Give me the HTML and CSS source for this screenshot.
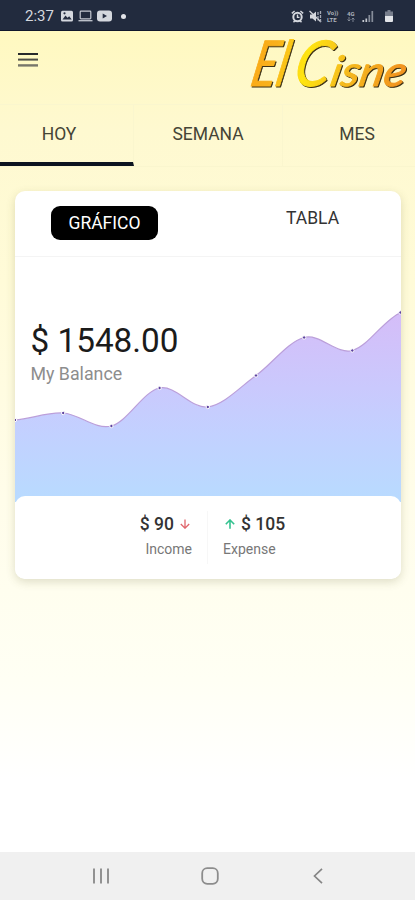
FILE: index.html
```html
<!DOCTYPE html>
<html lang="es">

<head>
    <meta charset="UTF-8">
    <meta name="viewport" content="width=device-width, initial-scale=1.0">
    <title>El Cisne</title>
    <link rel="stylesheet" href="styles.css">
</head>

<body>

    <!-- Barra de estado -->
    <div class="status-bar">
        <div class="status-left">
            <span class="hora">2:37</span>
            <svg width="14" height="12" viewBox="0 0 14 12">
                <rect x="1" y="0.7" width="12" height="10.8" rx="1.5" fill="#d5d8de" />
                <path d="M2.5 9.5l3-4 2 2.3 1.7-1.5 2.5 3.2z" fill="#252d40" />
                <circle cx="4.5" cy="3.3" r="1.1" fill="#252d40" />
            </svg>
            <svg width="15" height="12" viewBox="0 0 15 12">
                <rect x="2.2" y="1.2" width="10.6" height="7.6" rx="0.8" fill="none" stroke="#c5c9d1" stroke-width="1.2" />
                <path d="M0.5 10.7h14" stroke="#c5c9d1" stroke-width="1.3" />
            </svg>
            <svg width="15" height="12" viewBox="0 0 15 12">
                <rect x="0" y="0.5" width="15" height="11" rx="3" fill="#d5d8de" />
                <path d="M5.7 3.5v5L10 6z" fill="#252d40" />
            </svg>
            <span class="punto"></span>
        </div>
        <div class="status-right">
            <svg width="13" height="13" viewBox="0 0 13 13">
                <circle cx="6.5" cy="7" r="4.2" fill="none" stroke="#d5d8de" stroke-width="2" />
                <path d="M0.8 3.4L3.6 1M12.2 3.4L9.4 1M2.5 12.3l1.4-1.6M10.5 12.3l-1.4-1.6M6.5 4.6v2.8h2" fill="none" stroke="#d5d8de" stroke-width="1.4" />
            </svg>
            <svg width="13" height="13" viewBox="0 0 13 13">
                <path d="M1 4.5h2.5L7 1.5v10L3.5 8.5H1z" fill="#d5d8de" />
                <path d="M0.5 1L12 12" stroke="#d5d8de" stroke-width="1.3" />
                <path d="M9 2v8.5M11.5 1v11" stroke="#a5aab5" stroke-width="1.3" stroke-dasharray="3 1" />
            </svg>
            <span class="volte"><span>Vo))</span><span>LTE</span></span>
            <span class="red">
                <span>4G</span>
                <svg width="8" height="5" viewBox="0 0 8 5">
                    <path d="M2 0v4M0.5 2.5L2 4l1.5-1.5M6 5V1M4.5 2.5L6 1l1.5 1.5" fill="none" stroke="#868d9a" stroke-width="0.9" />
                </svg>
            </span>
            <svg width="12" height="12" viewBox="0 0 12 12">
                <path d="M1.3 12v-2M4.3 12V8.5" stroke="#c5c9d1" stroke-width="1.7" />
                <path d="M7.3 12V5M10.3 12V1" stroke="#868d9a" stroke-width="1.7" />
            </svg>
            <svg class="bateria" width="8" height="12" viewBox="0 0 8 12">
                <path d="M2.5 0h3v1.5H8V7H0V1.5h2.5z" fill="#777e8c" />
                <path d="M0 6h8v5a1 1 0 0 1-1 1H1a1 1 0 0 1-1-1z" fill="#e2e4e8" />
            </svg>
        </div>
    </div>

    <!-- Cabecera con menú y logo -->
    <header class="cabecera">
        <svg class="menu" width="20" height="16" viewBox="0 0 20 16">
            <path d="M0 2h20" stroke="#272a2c" stroke-width="2" />
            <path d="M0 7.6h20" stroke="#4e4f48" stroke-width="2" />
            <path d="M0 13.4h20" stroke="#77766a" stroke-width="2.4" />
        </svg>
        <svg class="logo" width="162" height="60" viewBox="0 0 162 60">
            <defs>
                <linearGradient id="oro" gradientUnits="userSpaceOnUse" x1="0" y1="0" x2="162" y2="0">
                    <stop offset="0" stop-color="#fba614" />
                    <stop offset="0.2" stop-color="#f9b11c" />
                    <stop offset="0.4" stop-color="#ffe510" />
                    <stop offset="0.65" stop-color="#f5bc1d" />
                    <stop offset="1" stop-color="#f2951f" />
                </linearGradient>
            </defs>
            <g class="logo-texto" transform="skewX(-12)">
                <text x="13" y="53" class="grande" textLength="36" lengthAdjust="spacingAndGlyphs">El</text>
                <text x="56" y="53" class="grande" textLength="36" lengthAdjust="spacingAndGlyphs">C</text>
                <text x="93" y="53" class="chica" textLength="75" lengthAdjust="spacingAndGlyphs">isne</text>
            </g>
        </svg>
    </header>

    <nav class="tabs">
        <div class="tab activo">HOY</div>
        <div class="tab">SEMANA</div>
        <div class="tab">MES</div>
    </nav>

    <main class="tarjeta">
        <div class="opciones">
            <div class="opcion"><span class="boton">GRÁFICO</span></div>
            <div class="opcion"><span class="enlace">TABLA</span></div>
        </div>

        <div class="grafico">
            <svg class="curva" width="386" height="245" viewBox="0 0 386 245">
                <defs>
                    <linearGradient id="area" gradientUnits="userSpaceOnUse" x1="0" y1="55" x2="0" y2="245">
                        <stop offset="0" stop-color="#d5bdf8" />
                        <stop offset="0.4" stop-color="#cac9fd" />
                        <stop offset="0.65" stop-color="#c2d1ff" />
                        <stop offset="1" stop-color="#b8dbff" />
                    </linearGradient>
                </defs>
                <path fill="url(#area)" d="M0 163C16 161.8 32.1 155 48.2 156C64.3 157 80.3 173.2 96.4 169C112.4 164.8 128.5 134.2 144.6 131C160.6 127.8 176.7 152.1 192.8 150C208.8 147.9 224.9 130.1 241 118.5C257 106.9 273 84.7 289.1 80.5C305.2 76.3 321.3 97.7 337.3 93.5C353.4 89.3 369.4 61.8 386 55.5V245H0z" />
                <path class="linea" d="M0 163C16 161.8 32.1 155 48.2 156C64.3 157 80.3 173.2 96.4 169C112.4 164.8 128.5 134.2 144.6 131C160.6 127.8 176.7 152.1 192.8 150C208.8 147.9 224.9 130.1 241 118.5C257 106.9 273 84.7 289.1 80.5C305.2 76.3 321.3 97.7 337.3 93.5C353.4 89.3 369.4 61.8 386 55.5" />
                <g class="marcas">
                    <circle cx="0" cy="163" r="1.7" />
                    <circle cx="48.2" cy="156" r="1.7" />
                    <circle cx="96.4" cy="169" r="1.7" />
                    <circle cx="144.6" cy="131" r="1.7" />
                    <circle cx="192.8" cy="150" r="1.7" />
                    <circle cx="241" cy="118.5" r="1.7" />
                    <circle cx="289.1" cy="80.5" r="1.7" />
                    <circle cx="337.3" cy="93.5" r="1.7" />
                    <circle cx="385.5" cy="55.5" r="1.7" />
                </g>
            </svg>
            <!-- Saldo encima de la curva -->
            <div class="saldo">
                <div class="monto">$ 1548.00</div>
                <div class="detalle">My Balance</div>
            </div>
        </div>

        <div class="resumen">
            <div class="ingreso">
                <div class="valor">$ 90
                    <svg width="10" height="10" viewBox="0 0 10 10">
                        <path d="M5 0.5v8.5M0.8 5L5 9.2 9.2 5" fill="none" stroke="#e0666c" stroke-width="1.3" />
                    </svg>
                </div>
                <div class="nombre">Income</div>
            </div>
            <div class="gasto">
                <div class="valor">
                    <svg width="10" height="10" viewBox="0 0 10 10">
                        <path d="M5 9.7V1.2M0.8 5.2L5 1 9.2 5.2" fill="none" stroke="#35c290" stroke-width="1.6" />
                    </svg>
                    $ 105
                </div>
                <div class="nombre">Expense</div>
            </div>
        </div>
    </main>

    <!-- Barra de navegación del teléfono -->
    <footer class="nav-bar">
        <svg width="18" height="18" viewBox="0 0 18 18">
            <path d="M2 1.5v15M9 1.5v15M16 1.5v15" stroke="#929292" stroke-width="2" />
        </svg>
        <svg width="18" height="18" viewBox="0 0 18 18">
            <rect x="1.2" y="1.2" width="15.6" height="15.6" rx="5" fill="none" stroke="#8c8c8c" stroke-width="1.8" />
        </svg>
        <svg width="18" height="18" viewBox="0 0 18 18">
            <path d="M13 1.8L5.5 9l7.5 7.2" fill="none" stroke="#858585" stroke-width="1.7" />
        </svg>
    </footer>

</body>

</html>
```

FILE: styles.css
```css
body {
    font-family: Roboto, "Liberation Sans", sans-serif;
    margin: 0;
    height: 900px;
    display: flex;
    flex-direction: column;
    overflow: hidden;
    color: #333;
    background: linear-gradient(#fff9c0 30px, #fef9d0 130px, #fffbd8 280px, #fffdea 500px, #fffff4 680px, #fff 780px);
}

svg {
    display: block;
}

.status-bar {
    height: 31px;
    box-sizing: border-box;
    flex-shrink: 0;
    background-color: #222b3e;
    border-bottom: 1px solid #10172c;
    color: #d5d8de;
    display: flex;
    justify-content: space-between;
    padding: 2px 22px 0 25px;
}

.status-left,
.status-right {
    display: flex;
    align-items: center;
}

.status-left {
    gap: 4px;
}

.hora {
    font-size: 15px;
    width: 31px;
}

.punto {
    width: 5px;
    height: 5px;
    border-radius: 50%;
    background-color: #e2e4e8;
    margin-left: 5px;
}

.status-right {
    gap: 5px;
}

.volte,
.red {
    display: flex;
    flex-direction: column;
    font-size: 6px;
    line-height: 7px;
    font-weight: bold;
    color: #aeb3bd;
    width: 13px;
}

.red {
    width: 10px;
    margin-left: 2px;
}

.bateria {
    margin-left: 6px;
}

.cabecera {
    height: 73px;
    flex-shrink: 0;
    display: flex;
    justify-content: space-between;
    align-items: flex-start;
    padding: 0 6px 0 18px;
}

.menu {
    margin-top: 21px;
}

.logo {
    margin-top: 2px;
    overflow: visible;
    filter: drop-shadow(1.5px 1.2px 0 #3b3016);
}

.logo text {
    font-family: Lato, "Liberation Sans", sans-serif;
    font-style: italic;
    stroke-linejoin: round;
}

.logo .grande {
    font-size: 63px;
}

.logo .chica {
    font-size: 42px;
}

.logo-texto {
    fill: url(#oro);
    stroke: url(#oro);
    stroke-width: 1px;
}

.tabs {
    display: flex;
    flex-shrink: 0;
    height: 63px;
    box-sizing: border-box;
    margin: 0 -17px 0 -15px;
    border-top: 1px solid #faf6ce;
    border-bottom: 1px solid #faf6ce;
}

.tab {
    flex: 1;
    text-align: center;
    font-size: 17.5px;
    line-height: 59px;
    color: #454436;
    border-right: 1px solid #faf6ce;
}

.activo {
    border-bottom: 4px solid #0c1420;
    height: 57px;
}

.tarjeta {
    width: 386px;
    height: 388px;
    margin: 24px auto 0;
    flex-shrink: 0;
    border-radius: 10px;
    background-color: #fff;
    box-shadow: 0 3px 10px rgba(90, 90, 40, 0.2);
    overflow: hidden;
}

.opciones {
    display: flex;
    height: 66px;
    box-sizing: border-box;
    border-bottom: 1px solid #f4f4f4;
    padding: 15px 14px 0 16px;
    font-size: 17.5px;
}

.opcion {
    flex: 1;
    display: flex;
    justify-content: center;
    align-items: flex-start;
}

.boton {
    background-color: #000;
    color: #fff;
    border-radius: 9px;
    width: 107px;
    line-height: 34px;
    text-align: center;
    margin-right: 30px;
}

.enlace {
    line-height: 24px;
    margin-left: 30px;
}

.grafico {
    position: relative;
    height: 239px;
}

.linea {
    fill: none;
    stroke: #bb9fda;
    stroke-width: 1.2;
}

.marcas circle {
    fill: #5d43a0;
    stroke: #fff;
    stroke-width: 1;
}

.saldo {
    position: absolute;
    top: 64px;
    left: 16px;
}

.monto {
    font-size: 33.3px;
    line-height: 40px;
    color: #1b1b1b;
}

.detalle {
    font-size: 17.8px;
    line-height: 25px;
    color: #8d8d8d;
}

.resumen {
    position: relative;
    height: 83px;
    box-sizing: border-box;
    border-radius: 10px;
    background-color: #fff;
    display: flex;
    padding: 15px 0;
}

.ingreso,
.gasto {
    flex: 1;
    display: flex;
    flex-direction: column;
}

.ingreso {
    align-items: flex-end;
    padding-right: 15px;
    border-right: 1px solid #f7f7f7;
}

.gasto {
    padding-left: 15px;
}

.valor {
    display: flex;
    align-items: center;
    gap: 6px;
    margin: 0 2px;
    font-size: 17.5px;
    line-height: 26px;
    font-weight: 500;
}

.nombre {
    font-size: 14px;
    line-height: 24px;
    color: #777;
}

.nav-bar {
    margin-top: auto;
    height: 48px;
    flex-shrink: 0;
    background-color: #f0f0f0;
    display: flex;
    justify-content: space-between;
    align-items: center;
    padding: 0 88px 0 92px;
}
```
